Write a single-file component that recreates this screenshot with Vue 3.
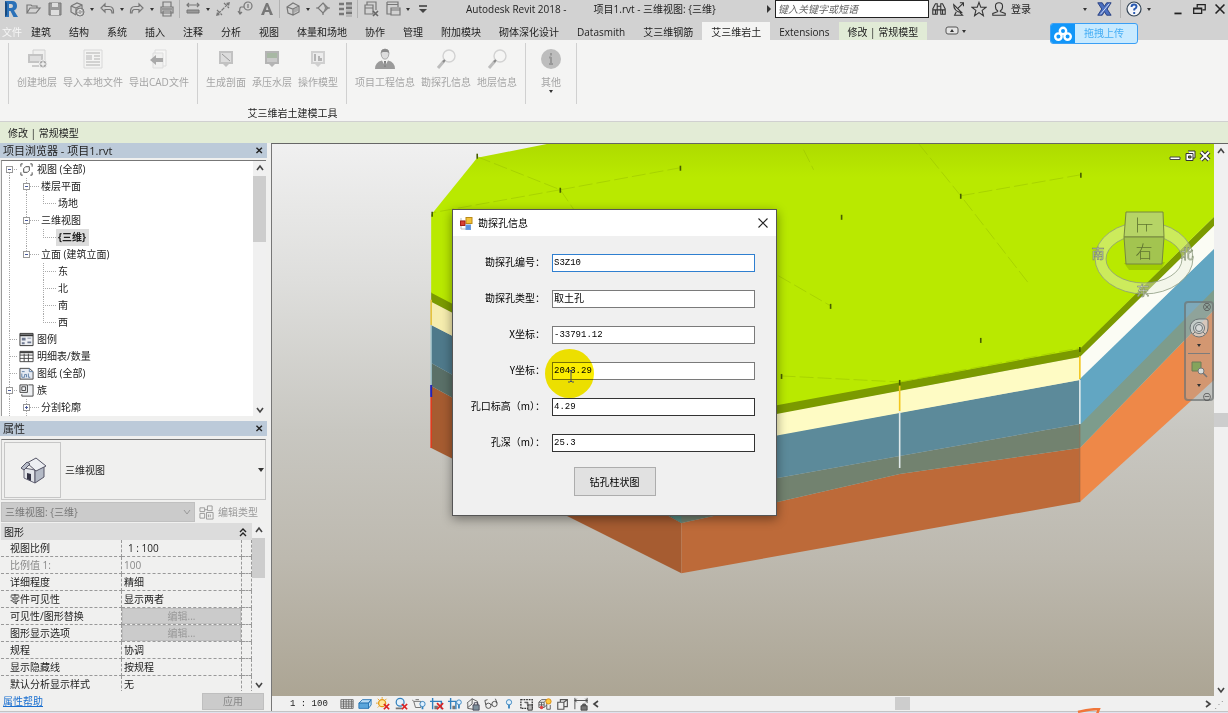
<template>
  <div class="app">
    <header class="titlebar">
      <div class="quick">
        <template v-for="(item, i) in quickTools" :key="i">
          <span v-if="item === '|'" class="sep"></span>
          <button v-else-if="item === 'v'" class="caret" aria-label="展开"></button>
          <button v-else class="tool" :aria-label="item">
            <svg viewBox="0 0 18 18" width="18" height="18" v-html="icons[item]"></svg>
          </button>
        </template>
      </div>
      <div class="title">
        <span>Autodesk Revit 2018 -</span>
        <span>项目1.rvt - 三维视图: {三维}</span>
      </div>
      <div class="info">
        <button class="arrow" aria-label="搜索范围"></button>
        <input class="search" v-model="search" placeholder="键入关键字或短语" aria-label="搜索">
        <button class="info-btn" v-for="name in infoTools" :key="name" :aria-label="name">
          <svg viewBox="0 0 18 18" width="16" height="16" v-html="icons[name]"></svg>
        </button>
        <button class="login">登录</button>
        <button class="caret" aria-label="账户"></button>
        <button class="tool tool-x" aria-label="Exchange">
          <svg viewBox="0 0 18 18" width="16" height="16" v-html="icons.exchange"></svg>
        </button>
        <span class="sep"></span>
        <button class="tool" aria-label="帮助">
          <svg viewBox="0 0 18 18" width="18" height="18" v-html="icons.help"></svg>
        </button>
        <button class="caret" aria-label="帮助菜单"></button>
        <div class="win">
          <button v-for="name in ['minimize', 'restore', 'close']" :key="name" :aria-label="name">
            <svg viewBox="0 0 18 18" width="16" height="16" v-html="icons[name]"></svg>
          </button>
        </div>
      </div>
    </header>

    <nav class="tabs">
      <button v-for="tab in tabs" :key="tab" class="tab"
        :class="{ file: tab === '文件', active: tab === activeTab, context: tab === '修改 | 常规模型' }"
        @click="activeTab = tab">{{ tab }}</button>
      <button class="tab-toggle" aria-label="最小化功能区">
        <svg viewBox="0 0 22 10" width="22" height="10">
          <rect x="1" y="1" width="12" height="7" rx="2" fill="#e4e4e4" stroke="#555" />
          <path d="M5 6L7 3L9 6Z" fill="#333" />
          <path d="M17 4H21L19 7Z" fill="#333" />
        </svg>
      </button>
    </nav>

    <section class="ribbon">
      <div class="ribbon-panel">
        <div class="groups">
          <div class="group" v-for="(group, i) in ribbon" :key="i">
            <button class="cmd" v-for="cmd in group" :key="cmd.label" :class="{ drop: cmd.menu }">
              <svg viewBox="0 0 22 22" width="22" height="22" v-html="icons[cmd.icon]"></svg>
              <span>{{ cmd.label }}</span>
              <i v-if="cmd.menu" class="tri"></i>
            </button>
          </div>
        </div>
        <div class="panel-title">艾三维岩土建模工具</div>
      </div>
    </section>
    <div class="options">修改 | 常规模型</div>

    <button class="upload">
      <span class="upload-logo">
        <svg viewBox="0 0 20 16" width="20" height="16" fill="none" stroke="#fff" stroke-width="2.4">
          <circle cx="10" cy="5" r="3.2" />
          <circle cx="5.4" cy="10.6" r="3.2" />
          <circle cx="14.6" cy="10.6" r="3.2" />
        </svg>
      </span>
      <span class="upload-text">拖拽上传</span>
    </button>

    <main class="work">
      <aside class="side">
        <div class="side-head"><span>项目浏览器 - 项目1.rvt</span><button aria-label="关闭">✕</button></div>
        <div class="browser">
          <ul class="tree">
            <li v-for="row in tree" :key="row.label">
              <span v-for="(cell, i) in row.cells" :key="i" class="cell" :class="cell">
                <svg v-if="cell === 'icon'" viewBox="0 0 16 16" width="15" height="15" v-html="icons[row.icon]"></svg>
                <i v-if="cell.includes('box')" :class="{ plus: cell.includes('plus') }"></i>
              </span>
              <span class="label" :class="{ near: row.icon, selected: row.selected }">{{ row.label }}</span>
            </li>
          </ul>
          <div class="vscroll">
            <svg viewBox="0 0 12 12" width="12" height="12"><path d="M3 8L6 4L9 8" /></svg>
            <div class="thumb thumb-tree"></div>
            <svg viewBox="0 0 12 12" width="12" height="12"><path d="M3 4L6 8L9 4" /></svg>
          </div>
        </div>

        <div class="side-head"><span>属性</span><button aria-label="关闭">✕</button></div>
        <div class="type">
          <div class="type-pic">
            <svg viewBox="0 0 28 28" width="28" height="28">
              <path d="M5 12L16 14V27L5 22Z" fill="#e3e5ea" stroke="#667" />
              <path d="M16 14L25 11V21L16 27Z" fill="#b4bac6" stroke="#556" />
              <path d="M8 7L17 2L27 10L17 15Z" fill="#eceef2" stroke="#556" />
              <path d="M2 12L8 6L11 8L5 14Z" fill="#b7bcc8" stroke="#556" />
              <path d="M8 17L12 18V25L8 23Z" fill="#334" />
            </svg>
          </div>
          <span>三维视图</span>
          <i class="tri"></i>
        </div>
        <div class="instance">
          <div class="instance-box">
            <select disabled aria-label="实例"><option>三维视图: {三维}</option></select>
            <svg viewBox="0 0 12 12" width="12" height="12"><path d="M3 4L6 8L9 4" /></svg>
          </div>
          <button class="edit-type" disabled>
            <svg viewBox="0 0 16 16" width="15" height="15" v-html="icons.editType"></svg>编辑类型
          </button>
        </div>
        <div class="props">
          <div class="props-view">
            <table>
              <colgroup>
                <col class="col-name">
                <col>
                <col class="col-tail">
              </colgroup>
              <thead>
                <tr>
                  <th colspan="3">
                    <div class="section-head">
                      <span>图形</span>
                      <svg viewBox="0 0 8 10" width="8" height="10"><path d="M1 5L4 2L7 5M1 9L4 6L7 9" fill="none" stroke="#222" stroke-width="1.4" /></svg>
                    </div>
                  </th>
                </tr>
              </thead>
              <tbody>
                <tr v-for="p in props" :key="p.name" :class="{ dim: p.dim }">
                  <td class="name">{{ p.name }}</td>
                  <td class="value">
                    <button v-if="p.button" disabled>编辑...</button>
                    <span v-else :class="{ scale: p.name === '视图比例' }">{{ p.value }}</span>
                  </td>
                  <td></td>
                </tr>
              </tbody>
            </table>
          </div>
          <div class="vscroll">
            <svg viewBox="0 0 12 12" width="12" height="12"><path d="M3 8L6 4L9 8" /></svg>
            <div class="thumb thumb-props"></div>
            <svg viewBox="0 0 12 12" width="12" height="12"><path d="M3 4L6 8L9 4" /></svg>
          </div>
        </div>
        <div class="side-foot">
          <a href="#">属性帮助</a>
          <button disabled>应用</button>
        </div>
      </aside>

      <section class="view">
        <div class="view-main">
          <div class="canvas">
            <svg class="scene" viewBox="272 144 941 552" preserveAspectRatio="xMidYMid slice">
              <defs>
                <linearGradient id="lime" x1="0" y1="0" x2="0" y2="1">
                  <stop offset="0" stop-color="#aedb00" />
                  <stop offset="0.12" stop-color="#b9e900" />
                  <stop offset="1" stop-color="#b9e900" />
                </linearGradient>
              </defs>
              <polygon v-for="(f, i) in faces" :key="i" :points="f.points" :fill="f.fill" />
              <path d="M477 157L560 190L680 168M560 190L432 213M560 190L575 212M918 144L960 196L1029 285M960 196L1080 175M778 276L830 306M781 376L899 382M899 382L1079 348M803 150L813 170"
                fill="none" stroke="#9cc400" stroke-width="0.6" stroke-dasharray="14 4" />
              <path v-for="(d, i) in dots" :key="'d' + i" :d="`M${d[0]} ${d[1] - 2}v5`" stroke="#465c00" stroke-width="1.6" />
              <path d="M899 386V411M1079 356V379" stroke="#f2c61c" stroke-width="1.6" />
              <path d="M899 411V468M1079 380V424" stroke="#dfe9ea" stroke-width="1.6" />
              <path d="M1079 424V502" stroke="#8a5a3c" stroke-width="0.6" />
              <path d="M431 300V325" stroke="#e5c23a" stroke-width="1.6" />
              <path d="M431 325V385" stroke="#9cc0c8" stroke-width="1.4" />
              <path d="M431 385V397" stroke="#2222b8" stroke-width="2" />
              <path d="M431 397V448" stroke="#e03a1c" stroke-width="1.6" />
            </svg>

            <div class="mdi">
              <button v-for="name in ['mdiMin', 'mdiMax', 'mdiClose']" :key="name" :aria-label="name">
                <svg viewBox="0 0 12 12" width="12" height="12" v-html="icons[name]"></svg>
              </button>
            </div>

            <svg class="cube" viewBox="0 0 110 100" width="110" height="100">
              <path fill-rule="evenodd" d="M6 50a49 36 0 1 0 98 0a49 36 0 1 0 -98 0M17 51a38 24 0 1 0 76 0a38 24 0 1 0 -76 0"
                fill="#e6eedc" fill-opacity="0.42" stroke="#8d9a80" stroke-width="0.8" />
              <path d="M35 55L76 54L72 62L40 62Z" fill="#5c7a00" opacity="0.25" />
              <path d="M37 4H74L75 29H35Z" fill="#b6d466" stroke="#76883f" />
              <path d="M35 29H75L73 56H37Z" fill="#a3c450" stroke="#76883f" />
              <text x="55" y="17" transform="rotate(90 55 17)" class="face">上</text>
              <text x="55" y="43" class="face">右</text>
              <text x="9" y="45" class="compass">南</text>
              <text x="98" y="45" class="compass">北</text>
              <text x="54" y="82" class="compass">东</text>
            </svg>

            <div class="navbar">
              <button class="nav-close" aria-label="关闭">⊗</button>
              <button aria-label="导航控制盘">
                <svg viewBox="0 0 20 20" width="20" height="20" fill="#d9dcdc" fill-opacity="0.7" stroke="#6d7577">
                  <path d="M10 1H17Q19 1 19 3V10A9 9 0 1 1 10 1Z" />
                  <circle cx="10" cy="10" r="5.5" />
                  <circle cx="10" cy="10" r="3.5" />
                  <path d="M6 14L4 16M14 14L16 16" />
                </svg>
              </button>
              <i class="tri"></i>
              <hr>
              <button aria-label="缩放">
                <svg viewBox="0 0 18 18" width="18" height="18">
                  <path d="M2 2H11V11H2Z" fill="#84a45c" stroke="#6d7a58" />
                  <circle cx="11" cy="11" r="3" fill="#d8dedd" stroke="#777" />
                  <path d="M13 13L17 17" stroke="#777" stroke-width="1.6" />
                </svg>
              </button>
              <i class="tri"></i>
              <button class="nav-close nav-end" aria-label="自定义">⊖</button>
            </div>

            <form class="dialog" @submit.prevent>
              <div class="dialog-head">
                <svg viewBox="0 0 13 13" width="13" height="13">
                  <path d="M1 4H5M1 1V12H8" fill="none" stroke="#bbb" />
                  <rect x="6" y="0.5" width="6" height="6" fill="#f2c23a" stroke="#b98a16" />
                  <rect x="0.5" y="4" width="4.5" height="4.5" fill="#d84035" stroke="#a32018" />
                  <rect x="6" y="8" width="4.5" height="4.5" fill="#5a93e0" stroke="#6a9adc" />
                </svg>
                <span>勘探孔信息</span>
                <button type="button" aria-label="关闭">
                  <svg viewBox="0 0 12 12" width="12" height="12"><path d="M1.5 1.5L10.5 10.5M10.5 1.5L1.5 10.5" stroke="#222" stroke-width="1.1" /></svg>
                </button>
              </div>
              <div class="fields">
                <div class="field" v-for="field in fields" :key="field.id">
                  <label :for="field.id">{{ field.label }}</label>
                  <input :id="field.id" v-model="field.value" :class="field.kind">
                </div>
              </div>
              <div class="actions"><button type="button">钻孔柱状图</button></div>
              <div class="pointer-halo"></div>
              <svg class="pointer" viewBox="0 0 8 14" width="8" height="14">
                <path d="M1 1H3L4 2L5 1H7M4 2V12M1 13H3L4 12L5 13H7" fill="none" stroke="#454c66" />
              </svg>
            </form>
          </div>
          <div class="vscroll vscroll-view">
            <svg viewBox="0 0 12 12" width="12" height="12"><path d="M3 8L6 4L9 8" /></svg>
            <div class="thumb thumb-view"></div>
            <svg viewBox="0 0 12 12" width="12" height="12"><path d="M3 4L6 8L9 4" /></svg>
          </div>
        </div>
        <div class="viewbar">
          <span class="ratio">1 : 100</span>
          <button v-for="name in viewTools" :key="name" :aria-label="name">
            <svg viewBox="0 0 16 16" width="14" height="14" v-html="icons[name]"></svg>
          </button>
          <svg class="chev" viewBox="0 0 12 12" width="12" height="12"><path d="M8 3L4 6L8 9" /></svg>
          <div class="hscroll"><div class="hthumb"></div></div>
          <svg class="chev" viewBox="0 0 12 12" width="12" height="12"><path d="M4 3L8 6L4 9" /></svg>
          <span class="grip">⋰</span>
        </div>
      </section>
    </main>
    <footer class="bottom">
      <svg viewBox="0 0 24 6" width="24" height="6"><path d="M1 4Q12 1 22 1L20 6" fill="none" stroke="#f0763a" stroke-width="2.4" /></svg>
    </footer>
  </div>
</template>

<script setup>
import { ref } from 'vue';

const search = ref('');
const activeTab = ref('艾三维岩土');

const quickTools = ['logo', 'open', 'save', 'sync', 'v', 'undo', 'v', 'redo', 'v', 'print', '|', 'measure', 'v', 'dimension',
  'tag', 'text', '|', 'box3d', 'v', 'section', 'thin', '|', 'closeHidden', 'switchWin', 'v', 'custom'];
const infoTools = ['binoculars', 'satellite', 'star', 'user'];
const tabs = ['文件', '建筑', '结构', '系统', '插入', '注释', '分析', '视图', '体量和场地', '协作', '管理', '附加模块',
  '砌体深化设计', 'Datasmith', '艾三维钢筋', '艾三维岩土', 'Extensions', '修改 | 常规模型'];

const ribbon = [
  [
    { label: '创建地层', icon: 'rStratum' },
    { label: '导入本地文件', icon: 'rImport' },
    { label: '导出CAD文件', icon: 'rExport' }
  ],
  [
    { label: '生成剖面', icon: 'rProfile' },
    { label: '承压水层', icon: 'rWater' },
    { label: '操作模型', icon: 'rModel' }
  ],
  [
    { label: '项目工程信息', icon: 'rPerson' },
    { label: '勘探孔信息', icon: 'rLens' },
    { label: '地层信息', icon: 'rLens' }
  ],
  [{ label: '其他', icon: 'rInfo', menu: true }]
];

const tree = [
  { label: '视图 (全部)', cells: ['box down h', 'icon'], icon: 'tViews' },
  { label: '楼层平面', cells: ['v', 'box v h long'] },
  { label: '场地', cells: ['v', 'v', 'up h long'] },
  { label: '三维视图', cells: ['v', 'box v h long'] },
  { label: '{三维}', cells: ['v', 'v', 'up h long'], selected: true },
  { label: '立面 (建筑立面)', cells: ['v', 'box up h long'] },
  { label: '东', cells: ['v', 'none', 'v h long'] },
  { label: '北', cells: ['v', 'none', 'v h long'] },
  { label: '南', cells: ['v', 'none', 'v h long'] },
  { label: '西', cells: ['v', 'none', 'up h long'] },
  { label: '图例', cells: ['v h', 'icon'], icon: 'tLegend' },
  { label: '明细表/数量', cells: ['v h', 'icon'], icon: 'tTable' },
  { label: '图纸 (全部)', cells: ['v h', 'icon'], icon: 'tSheet' },
  { label: '族', cells: ['box v h', 'icon'], icon: 'tFamily' },
  { label: '分割轮廓', cells: ['v', 'box plus v h long'] }
];

const props = [
  { name: '视图比例', value: '1 : 100' },
  { name: '比例值 1:', value: '100', dim: true },
  { name: '详细程度', value: '精细' },
  { name: '零件可见性', value: '显示两者' },
  { name: '可见性/图形替换', button: true },
  { name: '图形显示选项', button: true },
  { name: '规程', value: '协调' },
  { name: '显示隐藏线', value: '按规程' },
  { name: '默认分析显示样式', value: '无' }
];

const fields = ref([
  { id: 'code', label: '勘探孔编号：', value: 'S3Z10', kind: 'mono focus' },
  { id: 'type', label: '勘探孔类型：', value: '取土孔', kind: '' },
  { id: 'x', label: 'X坐标：', value: '-33791.12', kind: 'mono' },
  { id: 'y', label: 'Y坐标：', value: '2043.29', kind: 'mono' },
  { id: 'top', label: '孔口标高（m）：', value: '4.29', kind: 'mono dark' },
  { id: 'depth', label: '孔深（m）：', value: '25.3', kind: 'mono dark' }
]);

// strata from the bottom up: left, front and right faces, then the surface
const faces = [
  { fill: '#a65c31', points: '431,386 681,523 681,573 431,448' },
  { fill: '#5a7068', points: '431,363 681,502 681,523 431,386' },
  { fill: '#4f7a8b', points: '431,325 681,453 681,503 431,363' },
  { fill: '#f6edae', points: '431,302 681,431 681,454 431,325' },
  { fill: '#578c82', points: '660,510 681,516 777,478 777,490 681,523' },
  { fill: '#bd6a39', points: '681,523 777,502 899,474 1079,448 1079,502 681,573' },
  { fill: '#72826f', points: '681,502 777,478 899,456 1079,424 1079,448 899,474 777,502 681,523' },
  { fill: '#5c8a9a', points: '681,452 1079,380 1079,424 899,456 777,478 681,502' },
  { fill: '#fefbc4', points: '681,431 1079,357 1079,380 681,453' },
  { fill: '#ee8848', points: '1079,448 1213,310 1213,380 1079,502' },
  { fill: '#7d9c8c', points: '1079,424 1213,289 1213,310 1079,448' },
  { fill: '#62a6c2', points: '1079,378 1213,249 1213,290 1079,425' },
  { fill: '#fbfcf4', points: '1079,356 1213,225 1213,249 1079,379' },
  { fill: '#7b9a00', points: '431,292 681,422 1079,348 1213,217 1213,226 1079,357 681,432 431,302' },
  { fill: 'url(#lime)', points: '431,215 477,158 548,144 1213,144 1213,217 1079,349 681,423 431,293' }
];
const dots = [[477, 156], [680, 168], [560, 190], [432, 214], [841, 217], [960, 196], [1080, 175], [830, 306],
  [980, 340], [781, 376], [899, 382], [1079, 349]];

const viewTools = ['vDetail', 'vStyle', 'vSun', 'vShadow', 'vRender', 'vCrop', 'vCropShow', 'vLock', 'vGlasses', 'vBulb',
  'vTemp', 'vWorks', 'vAnalytic', 'vConstraint'];

const g = 'fill="none" stroke="#777" stroke-width="1.2"';
const k = 'fill="none" stroke="#333" stroke-width="1.2"';
const icons = {
  logo: '<path d="M3 1H10Q15 1 15 6Q15 9 12 10.500L16 17H11.500L8.500 11H7V17H3Z M7 4V8H9Q11 8 11 6Q11 4 9 4Z" fill="#2b71b8" fill-rule="evenodd"/><path d="M3 1L5 3V15L3 17Z" fill="#184a80"/>',
  open: `<path d="M3 13V5H7L8 6H13V8M3 13L6 8H16L12 13Z" ${g}/>`,
  save: '<path d="M3 3H15V15H3Z" fill="#999" stroke="#777"/><path d="M6 3H12V7H6ZM5 10H13V15H5Z" fill="#ddd"/>',
  sync: `<path d="M3 6L9 3L14 5V9M3 6V12L8 15M3 6L8 8L14 5M8 8V14" ${g}/><circle cx="12" cy="12" r="4" fill="#aaa" stroke="#777"/><path d="M10 12A2 2 0 0 1 14 11M14 12.500A2 2 0 0 1 10 13" stroke="#eee" fill="none"/>`,
  undo: `<path d="M7 4L3 8L7 12V9.500H12Q14 10 14 13H15.500Q16 6.500 11 6.500H7Z" ${g}/>`,
  redo: `<path d="M11 4L15 8L11 12V9.500H6Q4 10 4 13H2.500Q2 6.500 7 6.500H11Z" ${g}/>`,
  print: `<path d="M5 7V2H13V7M3 7H15V13H3ZM5 11H13V16H5Z" ${g} /><path d="M4 8H14V10H4Z" fill="#999"/>`,
  measure: `<path d="M3 5H15M5 3L3 5L5 7M13 3L15 5L13 7" ${g}/><path d="M3 10H15V13H3Z" fill="#999" stroke="#777"/>`,
  dimension: `<path d="M4 14L14 4M3 10L8 15M10 3L15 8" ${g} stroke-dasharray="4 1"/><path d="M2 16L3 12L6 15ZM16 2L12 3L15 6Z" fill="#777"/>`,
  tag: `<circle cx="12" cy="6" r="4" ${g}/><path d="M12 4V8M8 7H5Q3 8 4 13M2 11L4 14L6 12" ${g}/>`,
  text: '<path d="M3 15L8 3H10L15 15H12L11 12H7L6 15ZM8 10H10.500L9 6Z" fill="#777" fill-rule="evenodd"/>',
  box3d: `<path d="M3 7L9 3L15 6V12L9 15L4 13ZM3 7L9 9L15 6M9 9V15" ${g}/><path d="M10 9L14 7V11L10 13Z" fill="#aaa"/>`,
  section: `<path d="M9 3L14 8L9 13L4 8Z" ${g}/><path d="M9 3L14 8L9 13L11 8Z" fill="#888"/><path d="M2 8H4M14 8H16M9 13V15" ${g}/>`,
  thin: '<path d="M3 4H8M10 3.500H16M3 9H8M10 8H16M3 14H8M10 13H16" stroke="#777" stroke-width="2.400"/><path d="M10 6H16M10 11H16M10 16H16" stroke="#999"/>',
  closeHidden: `<path d="M5 5V2H14V10M3 5H11V14H3ZM3 8H11" ${g}/><path d="M11 11L16 16M16 11L11 16" stroke="#666" stroke-width="1.600"/>`,
  switchWin: `<path d="M3 2H14V7M3 2V14H7M3 4.500H14M7 8H16V15H7ZM7 10H16" ${g}/>`,
  custom: '<path d="M5 6H13" stroke="#444" stroke-width="1.600"/><path d="M5 9H13L9 13Z" fill="#444"/>',
  binoculars: `<path d="M2 15V9L5 3H7V15ZM16 15V9L13 3H11V15ZM7 6H11M7 10H11M2 10H7M11 10H16M5 10V15M13 10V15" ${k}/>`,
  satellite: `<path d="M3 4Q3 12 12 13ZM8 8L14 2M14 6V2H10M6 12L4 16H13L10 13" ${k}/>`,
  star: `<path d="M9 1.500L11 7H17L12.500 10.500L14 16.500L9 13L4 16.500L5.500 10.500L1 7H7Z" ${k}/>`,
  user: `<path d="M9 2Q5 2 5 6Q5 10 7.500 11V12L2 14V16H16V14L10.500 12V11Q13 10 13 6Q13 2 9 2Z" ${k}/>`,
  exchange: '<path d="M2 2H7L9.500 6L12 2H17L12.500 9L17 16H12L9.500 12L7 16H2L6.500 9Z" fill="#4b6fc0" stroke="#223a7c"/><path d="M15 3L5 15" stroke="#dfe8ff"/>',
  help: '<circle cx="9" cy="9" r="7" fill="#f4f6fa" stroke="#345" stroke-width="1.200"/><path d="M6.500 7Q6.500 4.500 9 4.500Q11.500 4.500 11.500 6.800Q11.500 8.200 9.200 9.300V10.500M9.200 12V14" fill="none" stroke="#2859b0" stroke-width="1.900"/>',
  minimize: '<path d="M5 14H13" stroke="#222" stroke-width="2"/>',
  restore: '<path d="M7 7V4H16V10H13M3 8H12V14H3ZM3 9H12" fill="none" stroke="#222" stroke-width="1.400"/>',
  close: '<path d="M4 4L14 14M14 4L4 14" stroke="#222" stroke-width="1.800"/>',

  rStratum: '<path d="M7 2H19V13H7Z" fill="#f0f0ef" stroke="#d0d0d0"/><path d="M2 6H17V15H2Z" fill="#c4c4c4"/><path d="M4 8H15V13H4Z" fill="#dedede"/><path d="M6 17H13V19H6Z" fill="#ccc"/><circle cx="17" cy="16" r="4" fill="#aaa" stroke="#eee"/><path d="M17 13.500V18.500M14.500 16H19.500" stroke="#f4f4f3" stroke-width="1.400"/>',
  rImport: '<path d="M2 2H20V20H2Z" fill="#f4f4f3" stroke="#d8d8d8"/><path d="M4 5H18M4 14H18M4 17H18M12 8H18M12 11H18" stroke="#c6c6c6" stroke-width="1.400"/><path d="M4 7H10V12H4Z" fill="#d4d4d4"/>',
  rExport: '<path d="M7 2H18V18H7Z" fill="#f6f6f5" stroke="#dcdcdc"/><path d="M5 5H15V20H5Z" fill="#f0f0ef" stroke="#ddd"/><path d="M2 12L8 7V10H15V14H8V17Z" fill="#a9a9a9"/>',
  rProfile: '<path d="M4 3H18V16H14L11 19L8 16H4Z" fill="#c2c2c2"/><path d="M6 5H16V14H6Z" fill="#dcdcdc"/><path d="M7 6L15 13" stroke="#999"/>',
  rWater: '<path d="M4 3H18V16H14L11 19L8 16H4Z" fill="#b4b4b4"/><path d="M6 5H16V10H6Z" fill="#a8b8a4"/><path d="M6 10H16V14H6Z" fill="#c9c9c9"/>',
  rModel: '<path d="M4 3H18V16H14L11 19L8 16H4Z" fill="#d0d0d0"/><path d="M6 5H16V14H6Z" fill="#ececec"/><path d="M8 6V13M12 8V13M14 10V13" stroke="#b4b4b4" stroke-width="2"/>',
  rPerson: '<path d="M7 5Q7 1 11 1Q15 1 15 5Q15 9 12.500 11H9.500Q7 9 7 5Z" fill="#ddd" stroke="#aaa"/><path d="M7 5Q7 1 11 1Q15 1 15 5L13 4H9Z" fill="#8a8a8a"/><path d="M1 21Q1 14 8 12.500L11 18L14 12.500Q21 14 21 21Z" fill="#9a9a9a"/><path d="M10 13H12L11.500 19H10.500Z" fill="#777"/>',
  rLens: '<circle cx="14" cy="8" r="6" fill="#f5f5f4" stroke="#d2d2d2" stroke-width="1.400"/><path d="M9 13L3 20" stroke="#bdbdbd" stroke-width="3"/><path d="M10 12L8 14" stroke="#888" stroke-width="2"/>',
  rInfo: '<circle cx="11" cy="11" r="10" fill="#bdbdbd"/><path d="M11 5V7.500M11 9V16M9 9.500H11M9 16H13" stroke="#989898" stroke-width="2"/>',

  tViews: '<path d="M4 2H2V5M12 2H14V5M4 14H2V11M12 14H14V11M5 7L7 5H11V9L9 11H5Z" fill="none" stroke="#444"/>',
  tLegend: '<path d="M1 1.500H15V14.500H1Z" fill="#eef0f4" stroke="#333"/><path d="M1 3.500H15" stroke="#333" stroke-width="2"/><path d="M3 6H7V9H3ZM9 6H13V7H9ZM3 11H6V13H3ZM9 10H13V12H9Z" fill="#6e7890"/>',
  tTable: '<path d="M1 2.500H15V13.500H1ZM1 6.500H15M1 10H15M5.500 5V13.500M10 5V13.500" fill="none" stroke="#444"/><path d="M1 3.500H15" stroke="#444" stroke-width="2"/>',
  tSheet: '<path d="M1 2.500H11L15 6V14H1Z" fill="#e6ebf3" stroke="#444"/><path d="M11 2.500V6H15M3 6H6M3 8V12H6V9H8V12M10 8V12H12" fill="none" stroke="#6080a8"/>',
  tFamily: '<path d="M1 2H9V10H1ZM10 2H15V14H3V12M3 4H7V8H3Z" fill="#eef0f3" stroke="#444"/>',
  editType: '<path d="M1 3H6V7H1ZM9 1H14V6H9ZM1 9H6V14H1ZM8 8H15V15H8ZM10 10V13M12 10V13M6 5H9" fill="none" stroke="#999"/>',

  mdiMin: '<path d="M1 7H11V9.500H1Z" fill="#fff" stroke="#444"/>',
  mdiMax: '<path d="M4 1H11V8H9M2 3.500H9V10.500H2Z" fill="#fff" stroke="#333"/><path d="M4.500 6H7V8H4.500Z" fill="#7a9a20" stroke="#333"/>',
  mdiClose: '<path d="M2 2L10 10M10 2L2 10" stroke="#333" stroke-width="4"/><path d="M2 2L10 10M10 2L2 10" stroke="#fff" stroke-width="2"/>',

  vDetail: '<path d="M1 3H15V13H1ZM1 5.500H15M1 8H15M1 10.500H15M4 3V13M7 3V13M10 3V13M13 3V13" fill="none" stroke="#666"/>',
  vStyle: '<path d="M1 7L5 3H15L12 7ZM12 7L15 3V9L12 13Z" fill="#b9dcf5" stroke="#2673b4"/><path d="M1 7H12V13H1Z" fill="#5ba6dc" stroke="#2673b4"/>',
  vSun: '<circle cx="7" cy="7" r="4" fill="#ffe9a0" stroke="#e49a16" stroke-width="1.500"/><path d="M7 0V2M0 7H2M2 2L3.500 3.500M12 2L10.500 3.500M2 12L3.500 10.500" stroke="#e49a16"/><path d="M9 8L15 14M15 8L9 14" stroke="#d22" stroke-width="2"/>',
  vShadow: '<circle cx="7" cy="6" r="4.500" fill="#e4f1fb" stroke="#3180bd" stroke-width="1.400"/><path d="M2 13H9" stroke="#777" stroke-width="2"/><path d="M9 8L15 14M15 8L9 14" stroke="#d22" stroke-width="2"/>',
  vRender: '<path d="M2 5H10V12H4ZM10 7L12 5M2 5L0 3M4 3H8" fill="none" stroke="#666"/><circle cx="12" cy="8" r="3" fill="#dff0ff" stroke="#3180bd"/><path d="M12 11V14" stroke="#3180bd" stroke-width="2"/>',
  vCrop: '<path d="M3 1V14M0 5H13V14" fill="none" stroke="#3180bd" stroke-width="1.600"/><path d="M5 10H9V14H5Z" fill="#777"/><path d="M8 7L15 14M15 7L8 14" stroke="#d22" stroke-width="2"/>',
  vCropShow: '<path d="M3 1V14M0 5H9V14" fill="none" stroke="#3180bd" stroke-width="1.600"/><path d="M5 10H8V14H5Z" fill="#777"/><circle cx="12.500" cy="6" r="2.700" fill="#dff0ff" stroke="#3180bd"/><path d="M12.500 9V13" stroke="#3180bd" stroke-width="2"/>',
  vLock: '<path d="M1 7L7 2L13 5V9M2 7V13L8 14M7 2V8L2 12" fill="none" stroke="#555"/><path d="M8 9H15V15H8Z" fill="#7d8f9c" stroke="#445"/><path d="M9.500 9V6.500H13.500V9" fill="none" stroke="#445"/>',
  vGlasses: '<circle cx="5" cy="10" r="3" fill="none" stroke="#444"/><circle cx="12" cy="8" r="3" fill="none" stroke="#444"/><path d="M2 9L1 4L4 3M15 7L13 2M8 9L9 8" fill="none" stroke="#444"/>',
  vBulb: '<circle cx="8" cy="6" r="3" fill="#e4f1fb" stroke="#3180bd"/><path d="M7 9H9V13H7Z" fill="#3180bd"/>',
  vTemp: '<path d="M1 3H14V13H1Z" fill="none" stroke="#333" stroke-width="1.500" stroke-dasharray="2 1"/><path d="M5 6H9V10M9 9H14V15H9Z" fill="#bbb" stroke="#333"/>',
  vWorks: '<path d="M1 6L4 3H10V9L7 12H1ZM1 6H7V12M7 6L10 3M4 6V12M1 9H7" fill="none" stroke="#555"/><circle cx="12" cy="5" r="3" fill="#ffc93c" stroke="#d98a10"/><circle cx="4" cy="12" r="2" fill="#d44"/><path d="M10 9V14H14V9" fill="none" stroke="#555"/>',
  vAnalytic: '<path d="M2 6H9V14H2ZM5 6V3H13V11H9M9 6L13 3" fill="none" stroke="#555" stroke-width="1.300"/>',
  vConstraint: '<path d="M1 1V14M15 1V7M1 4H15M3 2L1 4L3 6M13 2L15 4L13 6" fill="none" stroke="#444"/><path d="M8 10H15V15H8ZM10 10V8H13V10" fill="#777" stroke="#444"/>'
};
</script>

<style>
body {
  margin: 0;
  overflow: hidden;
}
</style>

<style scoped>
.app {
  position: relative;
  display: flex;
  flex-direction: column;
  height: 100vh;
  font-family: "Open Sans", "Noto Sans CJK SC", sans-serif;
  font-size: 10px;
  line-height: 16px;
  color: #222;
  background: #f0f0ef;
}

button {
  border: none;
  background: none;
  padding: 0;
  margin: 0;
  font: inherit;
  color: inherit;
}

svg {
  display: block;
  flex: none;
}

.titlebar {
  display: flex;
  align-items: center;
  justify-content: space-between;
  flex: none;
  height: 22px;
  background: #d2d2d2;
}

.quick,
.info,
.win {
  display: flex;
  align-items: center;
  flex: none;
  height: 18px;
}

.quick {
  margin-top: -4px;
}

.info {
  margin-top: -4px;
}

.tool {
  display: flex;
  justify-content: center;
  width: 22px;
}

.tool-x {
  margin: 0 4px;
}

.caret {
  width: 8px;
  height: 18px;
  display: flex;
  align-items: center;
  justify-content: center;
}

.caret::before,
.tri {
  content: "";
  border: 2px solid transparent;
  border-top: 3px solid #333;
  border-bottom: none;
}

.sep {
  width: 1px;
  height: 18px;
  margin: 0 2px 0 1px;
  background: #b2b2b2;
}

.title {
  display: flex;
  flex: 1;
  gap: 27px;
  margin-top: -4px;
  padding-left: 32px;
  white-space: nowrap;
}

.arrow::before {
  content: "";
  display: block;
  margin-right: 4px;
  border: 4px solid transparent;
  border-left: 4px solid #333;
  border-right: none;
}

.search {
  box-sizing: border-box;
  width: 154px;
  height: 18px;
  border: 1px solid #222;
  background: #fff;
  padding: 0 2px;
  font: inherit;
  font-style: italic;
}

.search::placeholder {
  color: #666;
}

.info-btn {
  width: 20px;
  display: flex;
  justify-content: center;
}

.login {
  padding: 0 50px 0 2px;
}

.win {
  margin-left: 12px;
}

.win button {
  display: flex;
  justify-content: flex-end;
  width: 21px;
}

.tabs {
  display: flex;
  align-items: stretch;
  flex: none;
  height: 18px;
  background: #d2d2d2;
  white-space: nowrap;
}

.tab {
  padding: 1px 9px 0;
}

.tab.file {
  padding: 1px 0 0 2px;
  color: #f6f6f6;
}

.tab.active {
  background: #f4f4f3;
}

.tab.context {
  background: #e1ebd6;
}

.tab-toggle {
  margin-left: 18px;
}

.ribbon {
  display: flex;
  flex: none;
  height: 81px;
  background: #f4f4f3;
}

.ribbon-panel {
  display: flex;
  flex-direction: column;
  padding: 3px 8px 0;
}

.groups {
  display: flex;
  height: 61px;
  border-right: 1px solid #d0d0d0;
}

.group {
  display: flex;
  padding: 0 5px;
  border-left: 1px solid #d0d0d0;
}

.cmd {
  display: flex;
  flex-direction: column;
  align-items: center;
  min-width: 46px;
  padding: 5px 3px 0;
  color: #a5a5a5;
  white-space: nowrap;
}

.cmd.drop {
  min-width: 40px;
}

.cmd svg {
  margin-bottom: 4px;
}

.panel-title {
  padding-top: 1px;
  text-align: center;
}

.options {
  flex: none;
  height: 21px;
  line-height: 22px;
  padding-left: 8px;
  border-top: 1px solid #d0d0d0;
  background: #e3ecd6;
}

.upload {
  position: absolute;
  top: 23px;
  right: 90px;
  display: flex;
  height: 21px;
  border: 1px solid #3a9ff5;
  border-radius: 3px;
  overflow: hidden;
  background: #c8eaff;
  color: #45aef5;
}

.upload-logo {
  display: flex;
  align-items: center;
  padding: 0 2px;
  background: #1296f8;
}

.upload-text {
  padding: 0 13px 0 9px;
  line-height: 19px;
}

.work {
  display: flex;
  flex: 1;
  min-height: 0;
}

.side {
  display: flex;
  flex-direction: column;
  flex: none;
  width: 267px;
  padding-right: 4px;
}

.side-head {
  display: flex;
  justify-content: space-between;
  flex: none;
  height: 15px;
  line-height: 15px;
  padding: 0 3px;
  margin-bottom: 2px;
  background: #bccad9;
}

.side-head span {
  font-size: 11px;
}

.side-head button {
  padding-right: 1px;
  font-weight: bold;
}

.browser {
  display: flex;
  flex: none;
  height: 255px;
  margin: 0 1px 5px;
  border-top: 1px solid #777;
  border-left: 1px solid #999;
  background: #fff;
}

.tree {
  flex: 1;
  margin: 0 0 0 -1px;
  padding: 0;
  list-style: none;
  overflow: hidden;
}

.tree li {
  display: flex;
  height: 17px;
  line-height: 17px;
}

.cell {
  position: relative;
  display: flex;
  align-items: center;
  justify-content: center;
  width: 17px;
  flex: none;
}

.cell.v::before,
.cell.up::before,
.cell.down::before {
  content: "";
  position: absolute;
  left: 8px;
  top: 0;
  bottom: 0;
  border-left: 1px dotted #aaa;
}

.cell.up::before {
  bottom: 8px;
}

.cell.down::before {
  top: 8px;
}

.cell.h::after {
  content: "";
  position: absolute;
  left: 8px;
  top: 8px;
  width: 8px;
  border-top: 1px dotted #aaa;
}

.cell.long::after {
  width: 13px;
}

.cell i {
  position: relative;
  z-index: 1;
  width: 7px;
  height: 7px;
  box-sizing: border-box;
  border: 1px solid #999;
  background: linear-gradient(#4a5a9a, #4a5a9a) center / 3px 1px no-repeat #fff;
}

.cell i.plus {
  background: linear-gradient(#4a5a9a, #4a5a9a) center / 3px 1px no-repeat, linear-gradient(#4a5a9a, #4a5a9a) center / 1px 3px no-repeat #fff;
}

.label {
  padding-left: 6px;
}

.label.near {
  padding-left: 2px;
}

.label.selected {
  margin-left: 4px;
  padding: 0 3px 0 2px;
  font-weight: bold;
  background: #dcdcdc;
}

.vscroll {
  display: flex;
  flex-direction: column;
  align-items: center;
  flex: none;
  width: 13px;
  padding-top: 1px;
  background: #f0f0f0;
}

.vscroll path,
.chev path,
.instance-box path {
  fill: none;
  stroke: #444;
  stroke-width: 1.6;
}

.vscroll svg:last-child {
  margin-top: auto;
}

.thumb {
  width: 100%;
  margin-top: 2px;
  background: #cdcdcd;
}

.thumb-tree {
  height: 66px;
}

.thumb-props {
  height: 40px;
}

.type {
  display: flex;
  align-items: center;
  gap: 4px;
  flex: none;
  height: 61px;
  margin: 1px 1px 2px;
  padding: 0 1px 0 2px;
  border: 1px solid #c6c6c6;
  border-top: 1px solid #777;
  box-sizing: border-box;
}

.type-pic {
  display: flex;
  align-items: center;
  justify-content: center;
  width: 55px;
  height: 54px;
  border: 1px solid #c6c6c6;
}

.type .tri {
  margin-left: auto;
  border-width: 4px 3px 0;
}

.instance {
  display: flex;
  flex: none;
  height: 20px;
  margin-left: 1px;
}

.instance-box {
  position: relative;
  width: 194px;
}

.instance select {
  appearance: none;
  width: 100%;
  height: 20px;
  padding: 0 3px;
  border: 1px solid #c0c0c0;
  border-radius: 0;
  background: #cbcbcb;
  color: #777;
  font: inherit;
  opacity: 1;
}

.instance-box svg {
  position: absolute;
  right: 2px;
  top: 4px;
}

.instance-box path {
  stroke: #999;
  stroke-width: 1;
}

.edit-type {
  display: flex;
  align-items: center;
  gap: 4px;
  padding-left: 4px;
  color: #999;
}

.props {
  display: flex;
  flex: 1;
  min-height: 0;
  margin: 1px 2px 0 1px;
}

.props-view {
  flex: 1;
  overflow: hidden;
}

.props table {
  width: 100%;
  table-layout: fixed;
  border-collapse: separate;
  border-spacing: 0;
}

.col-name {
  width: 121px;
}

.col-tail {
  width: 10px;
}

.props th {
  padding: 0 5px 0 3px;
  background: #dcdcdc;
  font-weight: normal;
}

.section-head {
  display: flex;
  align-items: center;
  justify-content: space-between;
  height: 17px;
}

.props td {
  box-sizing: border-box;
  height: 17px;
  padding: 0;
  border-bottom: 1px dashed #999;
  border-right: 1px dashed #999;
  line-height: 16px;
  white-space: nowrap;
}

.props .name {
  padding-left: 9px;
}

.props .value span {
  padding-left: 2px;
}

.props .value .scale {
  padding-left: 6px;
}

.props td button {
  display: block;
  width: 100%;
  height: 16px;
  border: 1px solid #bdbdbd;
  background: #cbcbcb;
  color: #999;
  line-height: 14px;
}

.props .dim {
  color: #888;
}

.side-foot {
  display: flex;
  align-items: center;
  justify-content: space-between;
  flex: none;
  height: 20px;
  padding: 0 3px;
}

.side-foot a {
  color: #1a6fd0;
}

.side-foot button {
  width: 62px;
  height: 17px;
  border: 1px solid #bfbfbf;
  background: #cbcbcb;
  color: #888;
  line-height: 15px;
}

.view {
  display: flex;
  flex-direction: column;
  flex: 1;
  min-width: 0;
  border-left: 1px solid #777;
  border-top: 1px solid #666;
}

.view-main {
  display: flex;
  flex: 1;
  min-height: 0;
}

.canvas {
  position: relative;
  flex: 1;
  background: linear-gradient(#f0f0f0 0%, #dededc 25%, #c8c7c1 52%, #bdb9af 75%, #aca594 100%);
}

.scene {
  position: absolute;
  width: 100%;
  height: 100%;
}

.mdi {
  position: absolute;
  top: 6px;
  right: 3px;
  display: flex;
  gap: 3px;
}

.cube {
  position: absolute;
  top: 64px;
  right: 15px;
}

.face {
  fill: #5f7430;
  font-size: 17px;
  font-weight: 300;
  text-anchor: middle;
  dominant-baseline: central;
}

.compass {
  fill: #dfe6d2;
  stroke: #7d8a6c;
  stroke-width: 0.6;
  font-size: 13px;
  text-anchor: middle;
  dominant-baseline: central;
}

.navbar {
  position: absolute;
  top: 157px;
  right: 0;
  display: flex;
  flex-direction: column;
  align-items: center;
  gap: 6px;
  box-sizing: border-box;
  width: 30px;
  height: 100px;
  border: 2px solid rgba(100, 105, 105, 0.6);
  border-radius: 4px;
  background: rgba(170, 175, 175, 0.4);
}

.nav-close {
  align-self: flex-end;
  height: 9px;
  line-height: 9px;
  color: #555;
}

.nav-end {
  margin-top: auto;
}

.navbar hr {
  width: 22px;
  margin: 0;
  border: none;
  border-top: 1px solid #7c7c7c;
}

.dialog {
  position: absolute;
  left: 180px;
  top: 65px;
  width: 323px;
  border: 1px solid #555;
  background: #f0f0f0;
  box-shadow: 0 3px 10px rgba(0, 0, 0, 0.4);
  font-family: "Noto Sans CJK SC", sans-serif;
  color: #000;
}

.dialog-head {
  display: flex;
  align-items: center;
  gap: 5px;
  height: 26px;
  padding: 0 7px;
  background: #fff;
}

.dialog-head button {
  margin-left: auto;
}

.fields {
  display: flex;
  flex-direction: column;
  gap: 18px;
  padding: 18px 21px 0 0;
}

.field {
  display: flex;
  gap: 7px;
  height: 18px;
}

.field label {
  width: 92px;
  text-align: right;
  white-space: nowrap;
}

.field input {
  flex: 1;
  min-width: 0;
  box-sizing: border-box;
  padding: 0 1px 2px;
  border: 1px solid #7a7a7a;
  border-radius: 0;
  background: #fff;
  font: inherit;
  color: #000;
}

.field .mono {
  padding-bottom: 0;
  font-family: "Liberation Mono", monospace;
  font-size: 9px;
}

.field .focus {
  border-color: #2f7fd0;
}

.field .dark {
  border-color: #333;
}

.actions {
  display: flex;
  justify-content: center;
  padding: 15px 0 19px;
}

.actions button {
  width: 82px;
  height: 29px;
  border: 1px solid #adadad;
  background: #e1e1e1;
}

.pointer-halo {
  position: absolute;
  left: 92px;
  top: 139px;
  width: 49px;
  height: 49px;
  border-radius: 50%;
  background: #fbed00;
  mix-blend-mode: multiply;
}

.pointer {
  position: absolute;
  left: 114px;
  top: 159px;
}

.vscroll-view {
  width: 14px;
}

.thumb-view {
  height: 14px;
  margin-top: 256px;
}

.viewbar {
  display: flex;
  align-items: center;
  flex: none;
  height: 15px;
  background: #f0f0f0;
}

.ratio {
  width: 48px;
  padding-left: 18px;
  font-family: "Liberation Mono", monospace;
  font-size: 9px;
  white-space: nowrap;
}

.viewbar button {
  display: flex;
  justify-content: center;
  width: 18px;
  flex: none;
}

.hscroll {
  flex: 1;
  display: flex;
  justify-content: center;
  height: 13px;
}

.hthumb {
  width: 15px;
  background: #cdcdcd;
}

.grip {
  width: 14px;
  color: #999;
}

.bottom {
  display: flex;
  flex: none;
  height: 2px;
  background: #dfe2ee;
  border-top: 1px solid #c4c4c4;
  box-sizing: border-box;
}

.bottom svg {
  margin: -4px 127px 0 auto;
}
</style>
